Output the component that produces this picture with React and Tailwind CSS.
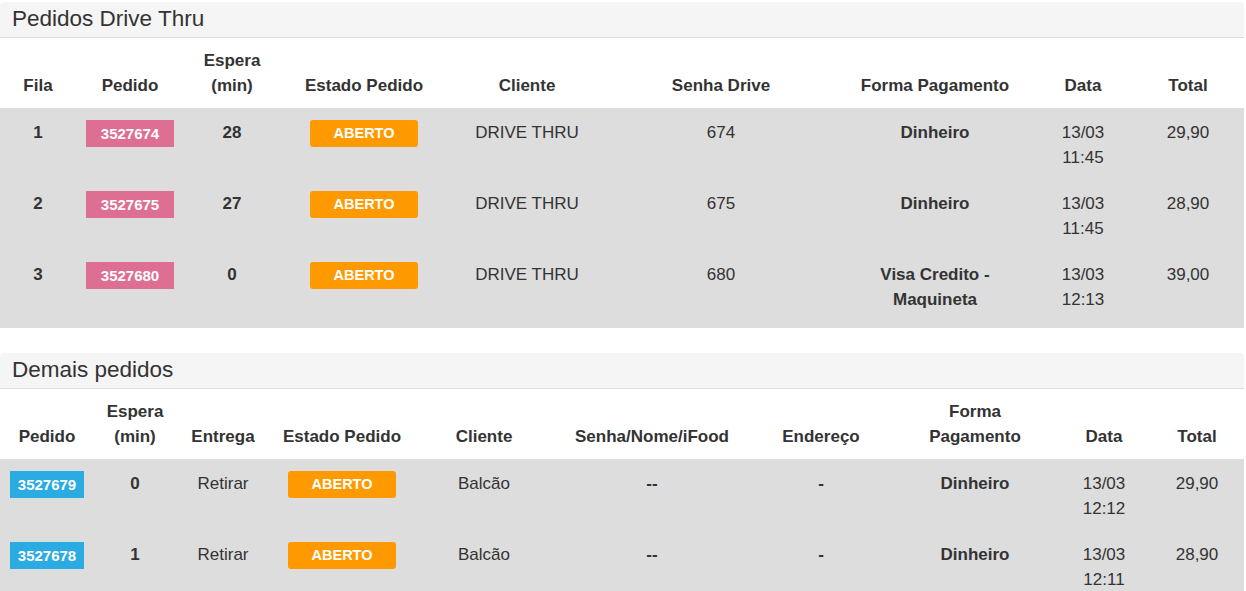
import React from "react";

const drive = [
  { fila: "1", pedido: "3527674", espera: "28", senha: "674", forma: ["Dinheiro"], data: ["13/03", "11:45"], total: "29,90" },
  { fila: "2", pedido: "3527675", espera: "27", senha: "675", forma: ["Dinheiro"], data: ["13/03", "11:45"], total: "28,90" },
  { fila: "3", pedido: "3527680", espera: "0", senha: "680", forma: ["Visa Credito -", "Maquineta"], data: ["13/03", "12:13"], total: "39,00" },
];

const outros = [
  { pedido: "3527679", espera: "0", data: ["13/03", "12:12"], total: "29,90" },
  { pedido: "3527678", espera: "1", data: ["13/03", "12:11"], total: "28,90" },
];

const th = "align-bottom text-center font-bold px-[8px] pt-[10px] pb-[10px] leading-[25px]";
const td = "align-top text-center px-[8px] pt-[12px] pb-[9px] leading-[25px]";

function Aberto() {
  return (
    <span className="inline-block align-top w-[108px] h-[27px] leading-[27px] rounded-[3px] bg-[#ff9900] text-white font-bold text-[14.5px]">
      ABERTO
    </span>
  );
}

function Heading({ children }) {
  return (
    <div className="rounded-t-[4px] bg-[#f5f5f5] border-b border-[#dddddd] px-[12px] pb-[3px] h-[36px] flex items-center text-[22.5px] leading-[25px] text-[#333333]">
      {children}
    </div>
  );
}

function Lines({ items }) {
  return items.map((l, i) => (
    <div key={i}>{l}</div>
  ));
}

export default function App() {
  return (
    <div className="font-['Liberation_Sans',Arial,sans-serif] text-[17px] text-[#333333] bg-white w-[1246px] h-[591px] overflow-hidden pt-[2px]">
      <div className="w-[1244px]">
        <Heading>Pedidos Drive Thru</Heading>
        <table className="w-full table-fixed border-collapse">
          <colgroup>
            <col className="w-[76px]" />
            <col className="w-[108px]" />
            <col className="w-[96px]" />
            <col className="w-[168px]" />
            <col className="w-[158px]" />
            <col className="w-[230px]" />
            <col className="w-[198px]" />
            <col className="w-[98px]" />
            <col className="w-[112px]" />
          </colgroup>
          <thead>
            <tr>
              <th className={th}>Fila</th>
              <th className={th}>Pedido</th>
              <th className={th}>Espera (min)</th>
              <th className={th}>Estado Pedido</th>
              <th className={th}>Cliente</th>
              <th className={th}>Senha Drive</th>
              <th className={th}>Forma Pagamento</th>
              <th className={th}>Data</th>
              <th className={th}>Total</th>
            </tr>
          </thead>
          <tbody>
            {drive.map((r) => (
              <tr key={r.pedido} className="bg-[#dddddd]">
                <td className={td + " font-bold"}>{r.fila}</td>
                <td className={td}>
                  <span className="inline-block align-top w-[88px] h-[27px] leading-[27px] bg-[#de6f93] text-white font-bold text-[15px]">
                    {r.pedido}
                  </span>
                </td>
                <td className={td + " font-bold"}>{r.espera}</td>
                <td className={td}><Aberto /></td>
                <td className={td}>DRIVE THRU</td>
                <td className={td}>{r.senha}</td>
                <td className={td + " font-bold"}><Lines items={r.forma} /></td>
                <td className={td}><Lines items={r.data} /></td>
                <td className={td}>{r.total}</td>
              </tr>
            ))}
          </tbody>
        </table>
        <div className="h-[7px] bg-[#dddddd]" />

        <div className="h-[25px]" />

        <Heading>Demais pedidos</Heading>
        <table className="w-full table-fixed border-collapse">
          <colgroup>
            <col className="w-[94px]" />
            <col className="w-[82px]" />
            <col className="w-[94px]" />
            <col className="w-[144px]" />
            <col className="w-[140px]" />
            <col className="w-[196px]" />
            <col className="w-[142px]" />
            <col className="w-[166px]" />
            <col className="w-[92px]" />
            <col className="w-[94px]" />
          </colgroup>
          <thead>
            <tr>
              <th className={th}>Pedido</th>
              <th className={th}>Espera (min)</th>
              <th className={th}>Entrega</th>
              <th className={th}>Estado Pedido</th>
              <th className={th}>Cliente</th>
              <th className={th}>Senha/Nome/iFood</th>
              <th className={th}>Endereço</th>
              <th className={th}>Forma<br />Pagamento</th>
              <th className={th}>Data</th>
              <th className={th}>Total</th>
            </tr>
          </thead>
          <tbody>
            {outros.map((r) => (
              <tr key={r.pedido} className="bg-[#dddddd]">
                <td className={td}>
                  <span className="inline-block align-top w-[74px] h-[27px] leading-[27px] bg-[#2aabe2] text-white font-bold text-[15px]">
                    {r.pedido}
                  </span>
                </td>
                <td className={td + " font-bold"}>{r.espera}</td>
                <td className={td}>Retirar</td>
                <td className={td}><Aberto /></td>
                <td className={td}>Balcão</td>
                <td className={td + " font-bold"}>--</td>
                <td className={td + " font-bold"}>-</td>
                <td className={td + " font-bold"}>Dinheiro</td>
                <td className={td}><Lines items={r.data} /></td>
                <td className={td}>{r.total}</td>
              </tr>
            ))}
          </tbody>
        </table>
      </div>
    </div>
  );
}
